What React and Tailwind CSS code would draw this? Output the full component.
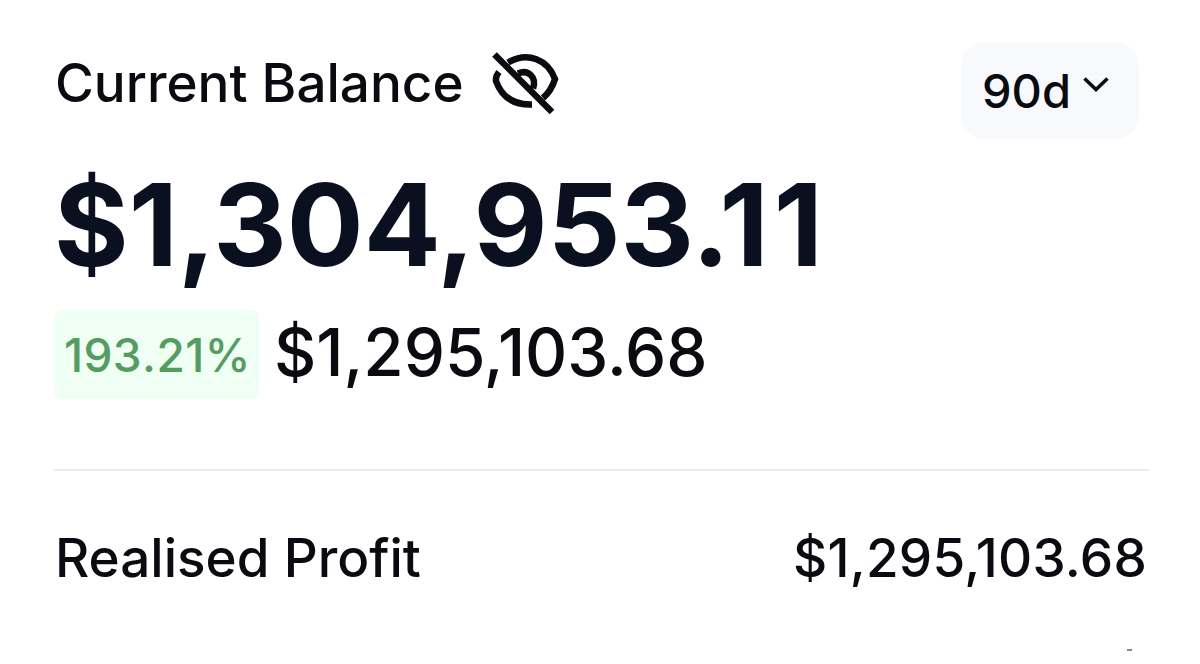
import React from 'react'

function HideIcon() {
  return (
    <svg className="h-[70px] w-[72px] shrink-0" viewBox="0 0 72 70" fill="none" stroke="#0a0b10" strokeWidth="6.5">
      <path d="M18 12.500C38 1 58 10 65 29C62.500 37 60 42 53 48" />
      <path d="M9 22C6.500 25 5.500 27 6 31C12 48 25 55 42 54.500" />
      <path d="M28 23.500C38 19 47 27 43 38.500" />
      <path d="M4.500 4.500L62 62" />
    </svg>
  )
}

function PeriodSelect({ value }) {
  return (
    <button className="mr-[10px] mt-[42px] flex h-[97px] w-[178px] rounded-[24px] bg-[#f8f9fd] pl-[21px] pt-[22px]">
      <span className="w-[88px] text-[47px] leading-[54px]">{value}</span>
      <svg className="ml-[12px] mt-[11px] h-[20px] w-[28px]" viewBox="0 0 28 20" fill="none" stroke="currentColor" strokeWidth="3.5">
        <path d="M2.500 3.500L14 14.500L25.500 3.500" />
      </svg>
    </button>
  )
}

export default function App() {
  return (
    <main className="flex h-[664px] w-[1200px] flex-col overflow-hidden bg-white pl-[54px] pr-[51px] font-['Inter',sans-serif] font-medium text-[#0a0b10]">
      <header className="flex h-[158px] justify-between">
        <div className="flex pt-[50px]">
          <h1 className="w-[436px] whitespace-nowrap pl-px text-[53px] leading-[66px]">Current Balance</h1>
          <HideIcon />
        </div>
        <PeriodSelect value="90d" />
      </header>
      <p className="h-[152px] whitespace-nowrap text-[114px] font-bold leading-[134px] text-[#0b1020]">
        $1,304,953.1<span className="ml-[5px]">1</span>
      </p>
      <div className="flex h-[159px]">
        <span className="h-[89px] w-[205px] rounded-[8px] bg-[#effff3] pl-[10px] text-[46px] leading-[90px] tracking-[0.4px] text-[#559c60] [font-kerning:none]">193.21%</span>
        <span className="ml-[15px] text-[65.5px] leading-[85px]">$1,295,103.68</span>
      </div>
      <hr className="h-[2px] shrink-0 border-0 bg-[#ececee]" />
      <section className="mt-[55px] flex justify-between text-[53px] leading-[64px]">
        <span className="pl-px">Realised Profit</span>
        <span className="pr-[2px] tracking-[0.25px]">$1,295,103.68</span>
      </section>
      <span className="mr-[17px] mt-[59px] h-[2px] w-[5px] shrink-0 self-end bg-[#888]" />
    </main>
  )
}
